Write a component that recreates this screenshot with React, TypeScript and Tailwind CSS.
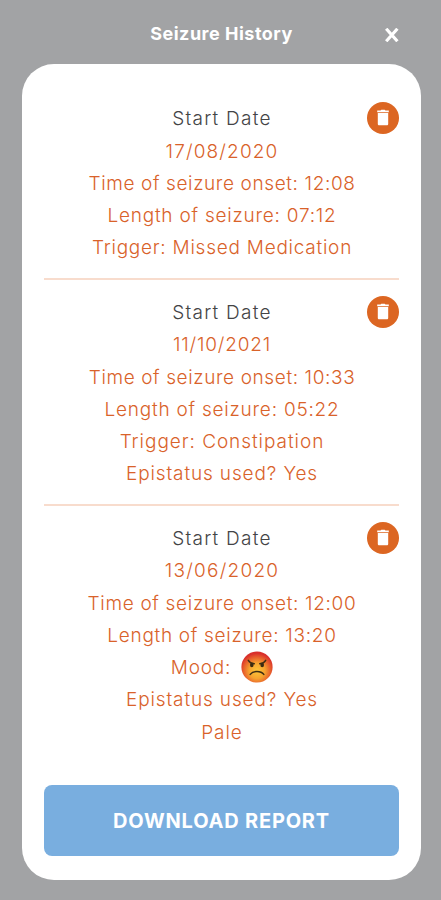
type Line = { text: string; className: string; mood?: boolean };

const entries: { id: number; lines: Line[] }[] = [
  {
    id: 1,
    lines: [
      { text: "17/08/2020", className: "tracking-[1.15px]" },
      { text: "Time of seizure onset: 12:08", className: "tracking-[0.62px]" },
      { text: "Length of seizure: 07:12", className: "tracking-[0.77px]" },
      { text: "Trigger: Missed Medication", className: "tracking-[0.75px]" },
    ],
  },
  {
    id: 2,
    lines: [
      { text: "11/10/2021", className: "tracking-[0.8px]" },
      { text: "Time of seizure onset: 10:33", className: "tracking-[0.61px]" },
      { text: "Length of seizure: 05:22", className: "tracking-[0.77px]" },
      { text: "Trigger: Constipation", className: "tracking-[0.95px]" },
      { text: "Epistatus used? Yes", className: "tracking-[0.87px]" },
    ],
  },
  {
    id: 3,
    lines: [
      { text: "13/06/2020", className: "tracking-[1.25px]" },
      { text: "Time of seizure onset: 12:00", className: "tracking-[0.68px]" },
      { text: "Length of seizure: 13:20", className: "tracking-[0.7px]" },
      { text: "Mood:", className: "tracking-[0.8px]", mood: true },
      { text: "Epistatus used? Yes", className: "tracking-[0.87px]" },
      { text: "Pale", className: "tracking-[0.9px]" },
    ],
  },
];

function TrashIcon() {
  return (
    <svg width="14" height="18" viewBox="0 0 14 18" fill="#fff">
      <path d="M4.5 1.6 5.3.8h3.4l.8.8h3.3v1.7H1.2V1.6z" />
      <path d="M1.8 4.1h10.4v10.9c0 .7-.6 1.3-1.3 1.3H3.1c-.7 0-1.3-.6-1.3-1.3z" />
    </svg>
  );
}

function AngryFace() {
  return (
    <svg width="32" height="32" viewBox="0 0 32 32">
      <defs>
        <radialGradient id="face" cx="50%" cy="62%" r="56%">
          <stop offset="0%" stopColor="#fcc63a" />
          <stop offset="45%" stopColor="#f6a32f" />
          <stop offset="80%" stopColor="#e65a2b" />
          <stop offset="100%" stopColor="#d92f2b" />
        </radialGradient>
      </defs>
      <circle cx="16" cy="16" r="15.6" fill="url(#face)" />
      <ellipse cx="10.8" cy="14" rx="1.8" ry="2.3" fill="#3c2c12" />
      <ellipse cx="21.2" cy="14" rx="1.8" ry="2.3" fill="#3c2c12" />
      <path d="M7.3 9.3c1.2 2 3.4 3.2 6 3.4M24.7 9.3c-1.2 2-3.4 3.2-6 3.4" fill="none" stroke="#3c2c12" strokeWidth="1.4" strokeLinecap="round" />
      <path d="M9.2 23.4c3-4 10.6-4 13.6 0" fill="none" stroke="#3c2c12" strokeWidth="1.5" strokeLinecap="round" />
    </svg>
  );
}

export default function App() {
  return (
    <div className="flex h-[900px] w-[441px] flex-col bg-[#a2a3a5] font-['Inter',sans-serif]">
      <header className="grid h-16 shrink-0 grid-cols-[56px_1fr_56px] items-center pt-[3px]">
        <h1 className="col-start-2 pl-[2px] text-center text-[18px] font-bold leading-6 tracking-[0.5px] text-white">Seizure History</h1>
        <button className="pt-[2px]" aria-label="Close">
          <svg width="14" height="14" viewBox="0 0 14 14" fill="none" stroke="#fff" strokeWidth="3.2">
            <path d="M1.2.8l11.2 12.4M12.4.8L1.2 13.2" />
          </svg>
        </button>
      </header>

      <main className="ml-[22px] flex h-[816px] w-[399px] flex-col rounded-[32px] bg-white px-[22px] pt-[38px]">
        {entries.map((entry) => (
          <section key={entry.id} className="mb-4 border-b-2 border-[#f8dccd] pb-[14.5px] text-center text-[19px] font-light leading-[32.25px] text-[#d9622a] last-of-type:mb-0 last-of-type:border-0 last-of-type:pb-0">
            <div className="grid h-[32.25px] grid-cols-[32px_1fr_32px] items-center">
              <h2 className="col-start-2 pl-[1px] pt-[2px] leading-[30px] tracking-[1.25px] text-[#444446]">Start Date</h2>
              <button className="flex h-8 w-8 items-center justify-center rounded-full bg-[#dc6622]" aria-label="Delete">
                <TrashIcon />
              </button>
            </div>
            {entry.lines.map((line) => (
              <p key={line.text} className="flex h-[32.25px] items-center justify-center whitespace-nowrap pl-[1px]">
                <span className={`pt-[2.5px] ${line.className}`}>{line.text}</span>
                {line.mood && (
                  <span className="ml-[10px]">
                    <AngryFace />
                  </span>
                )}
              </p>
            ))}
          </section>
        ))}

        <button className="mt-[37px] h-[71px] shrink-0 rounded-lg bg-[#79aedf] pt-[2px] text-[20px] font-bold tracking-[0.8px] text-white">DOWNLOAD REPORT</button>
      </main>
    </div>
  );
}
